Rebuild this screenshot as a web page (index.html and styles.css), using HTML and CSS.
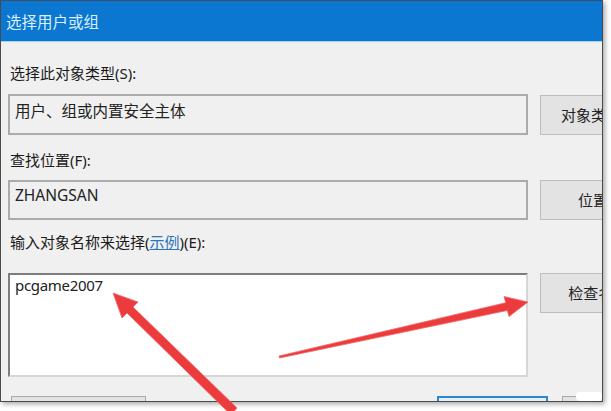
FILE: index.html
```html
<!DOCTYPE html>
<html lang="zh-CN">
<head>
<meta charset="utf-8">
<title>选择用户或组</title>
<link rel="stylesheet" href="styles.css">
</head>
<body>
<div class="window">
  <div class="titlebar"><span class="title">选择用户或组</span></div>
  <div class="content">
    <div class="label l1">选择此对象类型(S):</div>
    <div class="row r1">
      <div class="box ro cjk">用户、组或内置安全主体</div>
      <div class="btn">对象类型(O)...</div>
    </div>
    <div class="label l2">查找位置(F):</div>
    <div class="row r2">
      <div class="box ro">ZHANGSAN</div>
      <div class="btn">位置(L)...</div>
    </div>
    <div class="label l3">输入对象名称来选择(<span class="link">示例</span>)(E):</div>
    <div class="row r3">
      <div class="box edit">pcgame2007</div>
      <div class="btn">检查名称(C)</div>
    </div>
    <div class="bottom">
      <div class="btn wide">高级(A)...</div>
      <div class="spacer"></div>
      <div class="btn ok">确定</div>
      <div class="btn cancel">取消</div>
    </div>
  </div>
</div>
<div class="blob"></div>
<svg class="arrows" width="611" height="411" viewBox="0 0 611 411">
  <polygon class="arrow" points="113,293 138,302 133,307 237,408 231,415 127,313 122,318"/>
  <polygon class="arrow" points="528,302 504,296.5 505.7,302.7 279,356 279.5,358 507.3,310.5 509,316.5"/>
</svg>
</body>
</html>
```

FILE: styles.css
```css
html, body {
  margin: 0;
  padding: 0;
  background: #ffffff;
}
body {
  width: 611px;
  height: 411px;
  overflow: hidden;
  position: relative;
  font-family: "Noto Sans", "Noto Sans CJK SC", sans-serif;
  font-size: 15px;
  line-height: 20px;
  color: #1c1c1c;
}
.window {
  width: 601px;
  height: 400px;
  border: 1px solid #4a4a4a;
  border-top-color: #3d4f66;
  background: #f0f0f0;
  overflow: hidden;
  display: flex;
  flex-direction: column;
  box-shadow: 2px 2px 5px rgba(0, 0, 0, 0.35);
}
.titlebar {
  height: 40px;
  flex: none;
  background: #0b77d0;
  border-bottom: 1px solid #9fd6f2;
  display: flex;
  align-items: center;
  padding-left: 5px;
}
.title {
  color: #d9effb;
  font-size: 15.5px;
  margin-top: 2px;
}
.content {
  padding-left: 7px;
  display: flex;
  flex-direction: column;
}
.label {
  height: 20px;
  padding-left: 2px;
  color: #1a1a1a;
  white-space: nowrap;
}
.l1 { margin-top: 21px; }
.l2 { margin-top: 15px; }
.l3 { margin-top: 12px; }
.link {
  color: #2a74c0;
  text-decoration: underline;
}
.row {
  display: flex;
  align-items: flex-start;
}
.r1 { margin-top: 11px; }
.r2 { margin-top: 10px; }
.r3 { margin-top: 21px; }
.box {
  box-sizing: border-box;
  width: 520px;
  flex: none;
  padding-left: 5px;
  color: #222222;
  white-space: nowrap;
}
.cjk { font-size: 15.5px; }
.ro {
  background: #f0f0f0;
  border: 2px solid #ababab;
}
.r1 .box { height: 41px; padding-top: 5px; }
.r2 .box { height: 40px; padding-top: 3px; font-size: 15.5px; }
.edit {
  height: 104px;
  background: #ffffff;
  border: 2px solid #d6d6d6;
  border-top-color: #7d7d7d;
  border-left-color: #7d7d7d;
  padding-top: 0;
  letter-spacing: -0.3px;
}
.btn {
  box-sizing: border-box;
  flex: none;
  width: 135px;
  height: 40px;
  margin-left: 12px;
  background: #e3e3e3;
  border: 1px solid #bdbdbd;
  display: flex;
  align-items: center;
  justify-content: center;
  color: #222222;
  white-space: nowrap;
}
.r1 .btn { margin-top: 1px; }
.bottom {
  display: flex;
  margin-top: 19px;
  height: 32px;
}
.bottom .btn {
  height: 32px;
}
.bottom .wide {
  margin-left: 3px;
  width: 135px;
  border-color: #a9a9a9;
}
.spacer { width: 291px; flex: none; }
.bottom .ok {
  width: 111px;
  margin-left: 0;
  border: 2px solid #2f86d0;
  background: #e3f0fa;
}
.bottom .cancel {
  width: 111px;
  margin-left: 14px;
  border-color: #a9a9a9;
}
.blob {
  position: absolute;
  left: 576px;
  top: 392px;
  width: 26px;
  height: 9px;
  background: #ffffff;
  border-radius: 4px;
}
.arrows {
  position: absolute;
  left: 0;
  top: 0;
  pointer-events: none;
}
.arrow {
  fill: #ec3b3d;
  stroke: #f06a6a;
  stroke-width: 0.8;
  stroke-linejoin: round;
}
```
